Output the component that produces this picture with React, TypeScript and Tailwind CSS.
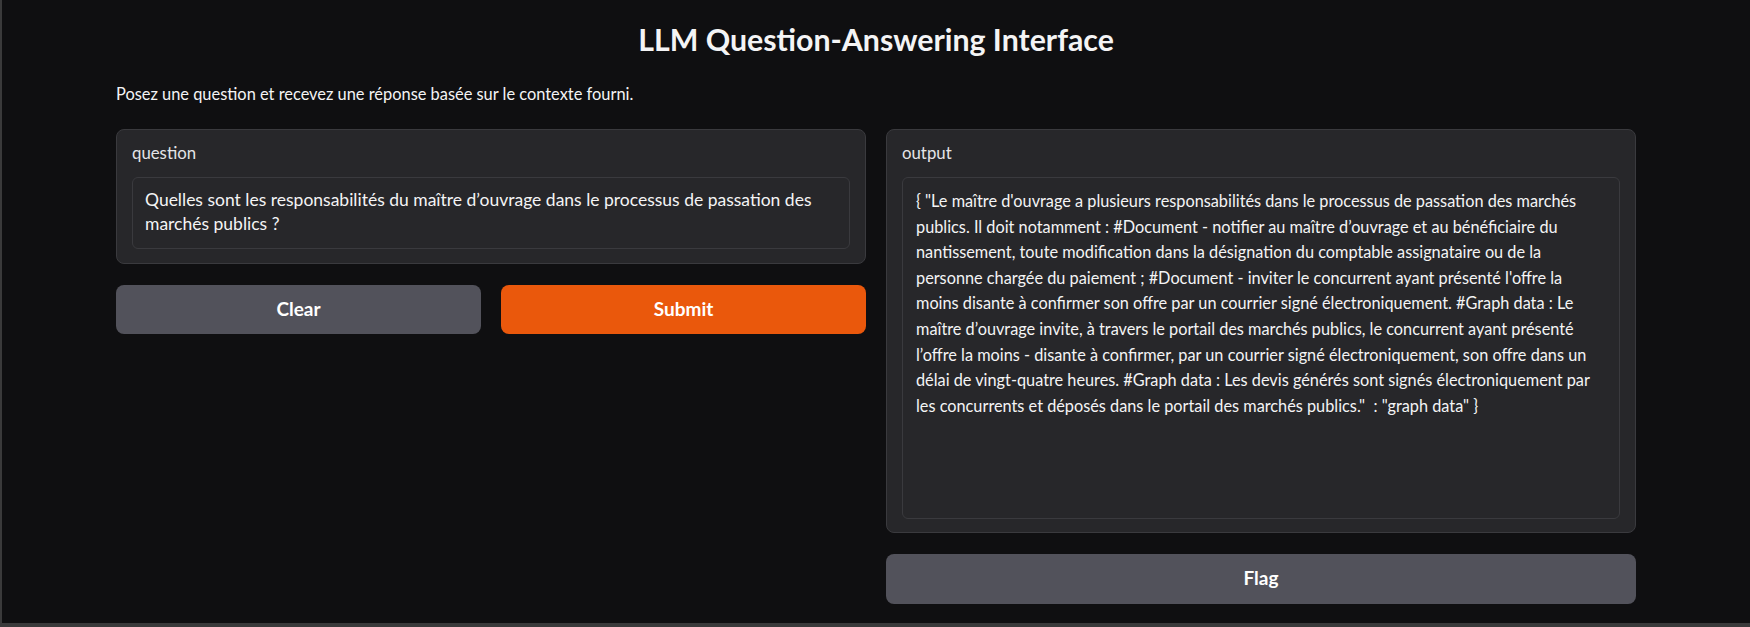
import React from "react";

const questionLines = [
  "Quelles sont les responsabilités du maître d’ouvrage dans le processus de passation des",
  "marchés publics ?",
];

const outputLines = [
  "{ \"Le maître d'ouvrage a plusieurs responsabilités dans le processus de passation des marchés",
  "publics. Il doit notamment : #Document - notifier au maître d’ouvrage et au bénéficiaire du",
  "nantissement, toute modification dans la désignation du comptable assignataire ou de la",
  "personne chargée du paiement ; #Document - inviter le concurrent ayant présenté l'offre la",
  "moins disante à confirmer son offre par un courrier signé électroniquement. #Graph data : Le",
  "maître d’ouvrage invite, à travers le portail des marchés publics, le concurrent ayant présenté",
  "l’offre la moins - disante à confirmer, par un courrier signé électroniquement, son offre dans un",
  "délai de vingt-quatre heures. #Graph data : Les devis générés sont signés électroniquement par",
  "les concurrents et déposés dans le portail des marchés publics.\"  : \"graph data\" }",
];

export default function App() {
  return (
    <div className="flex h-[627px] w-full flex-col bg-[#3a3a3b] font-[family-name:Lato,sans-serif]">
      <div className="ml-[2px] h-[623px] bg-[#0f0f11]">
        <div className="mx-auto flex w-[1520px] flex-col">
          <h1 className="mt-[19px] text-center text-[30.3px] font-bold leading-[40px] text-[#f4f4f5]">
            LLM Question-Answering Interface
          </h1>
          <p className="mt-[23px] text-[16.4px] leading-[24px] text-[#f4f4f5]">
            Posez une question et recevez une réponse basée sur le contexte fourni.
          </p>
          <div className="mt-[23px] grid grid-cols-2 gap-[20px]">
            <div className="flex flex-col gap-[20.5px]">
              <div className="rounded-[8px] border border-[#3a3a3e] bg-[#27272a] px-[15px] pt-[11px] pb-[14px]">
                <div className="text-[16.8px] leading-[24px] text-[#e4e4e7]">question</div>
                <div className="mt-[12px] rounded-[6px] border border-[#3a3a3e] bg-[#27272a] px-[12px] pt-[10px] pb-[12px] text-[17.5px] leading-[24px] text-[#f4f4f5]">
                  {questionLines.map((l, i) => (
                    <div key={i} className="whitespace-pre">
                      {l}
                    </div>
                  ))}
                </div>
              </div>
              <div className="grid grid-cols-2 gap-[20px]">
                <button className="h-[49px] rounded-[8px] bg-[#52525b] text-[19px] font-bold text-white">
                  Clear
                </button>
                <button className="h-[49px] rounded-[8px] bg-[#ea580c] text-[19px] font-bold text-white">
                  Submit
                </button>
              </div>
            </div>
            <div className="flex flex-col gap-[20.5px]">
              <div className="rounded-[8px] border border-[#3a3a3e] bg-[#27272a] px-[15px] pt-[11px] pb-[13px]">
                <div className="text-[16.8px] leading-[24px] text-[#e4e4e7]">output</div>
                <div className="mt-[12px] h-[342px] rounded-[6px] border border-[#3a3a3e] bg-[#27272a] px-[13px] pt-[10px] text-[16.3px] leading-[25.6px] text-[#f4f4f5]">
                  {outputLines.map((l, i) => (
                    <div key={i} className="whitespace-pre">
                      {l}
                    </div>
                  ))}
                </div>
              </div>
              <button className="h-[50px] rounded-[8px] bg-[#52525b] text-[19px] font-bold text-white">
                Flag
              </button>
            </div>
          </div>
        </div>
      </div>
    </div>
  );
}
